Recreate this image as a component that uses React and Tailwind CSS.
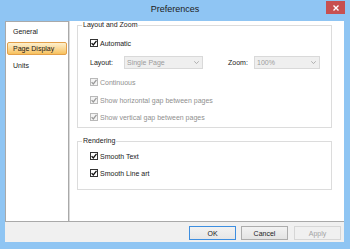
import React from 'react';

const Check = ({ disabled }) => (
  <span
    className={`flex h-[8px] w-[8px] items-center justify-center border ${
      disabled ? 'border-[#b9b9b9] bg-[#f4f4f4]' : 'border-[#333333] bg-white'
    }`}
  >
    <svg width="6" height="6" viewBox="0 0 6 6">
      <path
        d="M0.6 3.1 L2.3 4.9 L5.5 0.8"
        fill="none"
        stroke={disabled ? '#9a9a9a' : '#111111'}
        strokeWidth="1.3"
      />
    </svg>
  </span>
);

const CheckRow = ({ label, disabled, className = '' }) => (
  <div className={`flex h-[12px] items-center ${className}`}>
    <Check disabled={disabled} />
    <span className={`ml-[2px] ${disabled ? 'text-[#8f8f8f]' : 'text-[#1a1a1a]'}`}>{label}</span>
  </div>
);

const Select = ({ value, width }) => (
  <div
    className={`flex h-[13px] items-center justify-between border border-[#d9d9d9] bg-[#efefef] pl-[2px] pr-[3px] text-[#9c9c9c] ${width}`}
  >
    <span>{value}</span>
    <svg width="5" height="3" viewBox="0 0 5 3">
      <path d="M0.3 0.3 L2.5 2.6 L4.7 0.3" fill="none" stroke="#a8a8a8" strokeWidth="0.9" />
    </svg>
  </div>
);

const Button = ({ children, variant }) => {
  const styles = {
    primary: 'border-[#3d8ee0] text-[#1a1a1a] bg-gradient-to-b from-[#f2f2f2] to-[#e6e6e6]',
    normal: 'border-[#acacac] text-[#1a1a1a] bg-gradient-to-b from-[#f2f2f2] to-[#e3e3e3]',
    disabled: 'border-[#d6d6d6] text-[#a3a3a3] bg-[#f0f0f0]',
  };
  return (
    <div className={`flex h-[14px] w-[47px] items-center justify-center border ${styles[variant]}`}>
      {children}
    </div>
  );
};

export default function App() {
  const navItems = ['General', 'Page Display', 'Units'];

  return (
    <div
      className="flex h-[249px] w-[350px] flex-col bg-[#8fc5f3] text-[7px] leading-none"
      style={{ fontFamily: '"Liberation Sans", Arial, sans-serif' }}
    >
      {/* title bar */}
      <div className="grid h-[21px] grid-cols-[1fr_auto_1fr] items-start">
        <div />
        <div className="pt-[5px] text-[9px] text-[#202020]">Preferences</div>
        <div className="flex justify-end pr-[5px] pt-[1px]">
          <div className="flex h-[13px] w-[19px] items-center justify-center bg-[#c75050]">
            <svg width="6" height="6" viewBox="0 0 6 6">
              <path d="M0.5 0.5 L5.5 5.5 M5.5 0.5 L0.5 5.5" stroke="white" strokeWidth="1.4" />
            </svg>
          </div>
        </div>
      </div>

      <div className="flex flex-col pl-[5px] pr-[6px]">
        {/* main */}
        <div className="flex h-[200px]">
          <div className="flex w-[64px] flex-col gap-[4px] border-x border-t border-[#a9a9a9] bg-white px-px pt-[3px]">
            {navItems.map((item) => (
              <div
                key={item}
                className={`flex h-[13px] items-center rounded-[2px] border pl-[5px] ${
                  item === 'Page Display'
                    ? 'border-[#e3a04a] bg-gradient-to-b from-[#fdf0cd] to-[#f7c15c] text-[#1a1a1a]'
                    : 'border-transparent text-[#1a1a1a]'
                }`}
              >
                {item}
              </div>
            ))}
          </div>

          <div className="flex flex-1 flex-col border-l border-[#dadada] bg-white pl-[7px] pr-[12px]">
            <fieldset className="border border-[#dcdcdc] pb-[4px]">
              <legend className="ml-[4px] px-px leading-[8px] text-[#1a1a1a]">Layout and Zoom</legend>
              <div className="flex flex-col pl-[12px]">
                <CheckRow label="Automatic" className="mt-[8px]" />
                <div className="mt-[7px] flex h-[13px] items-center">
                  <span className="w-[34px] text-[#1a1a1a]">Layout:</span>
                  <Select value="Single Page" width="w-[79px]" />
                  <span className="ml-[25px] w-[26px] text-[#1a1a1a]">Zoom:</span>
                  <Select value="100%" width="w-[66px]" />
                </div>
                <CheckRow label="Continuous" disabled className="mt-[7px]" />
                <CheckRow label="Show horizontal gap between pages" disabled className="mt-[6px]" />
                <CheckRow label="Show vertical gap between pages" disabled className="mt-[5px]" />
              </div>
            </fieldset>

            <fieldset className="mt-[9px] border border-[#dcdcdc] pb-[10px]">
              <legend className="ml-[4px] px-px leading-[8px] text-[#1a1a1a]">Rendering</legend>
              <div className="flex flex-col pl-[12px]">
                <CheckRow label="Smooth Text" className="mt-[5px]" />
                <CheckRow label="Smooth Line art" className="mt-[5px]" />
              </div>
            </fieldset>
          </div>
        </div>

        {/* buttons */}
        <div className="flex h-[21px] justify-end gap-[5px] border-t border-[#a9a9a9] bg-[#f0f0f0] pr-[3px] pt-[4px]">
          <Button variant="primary">OK</Button>
          <Button variant="normal">Cancel</Button>
          <div className="ml-px">
            <Button variant="disabled">Apply</Button>
          </div>
        </div>
      </div>
    </div>
  );
}
